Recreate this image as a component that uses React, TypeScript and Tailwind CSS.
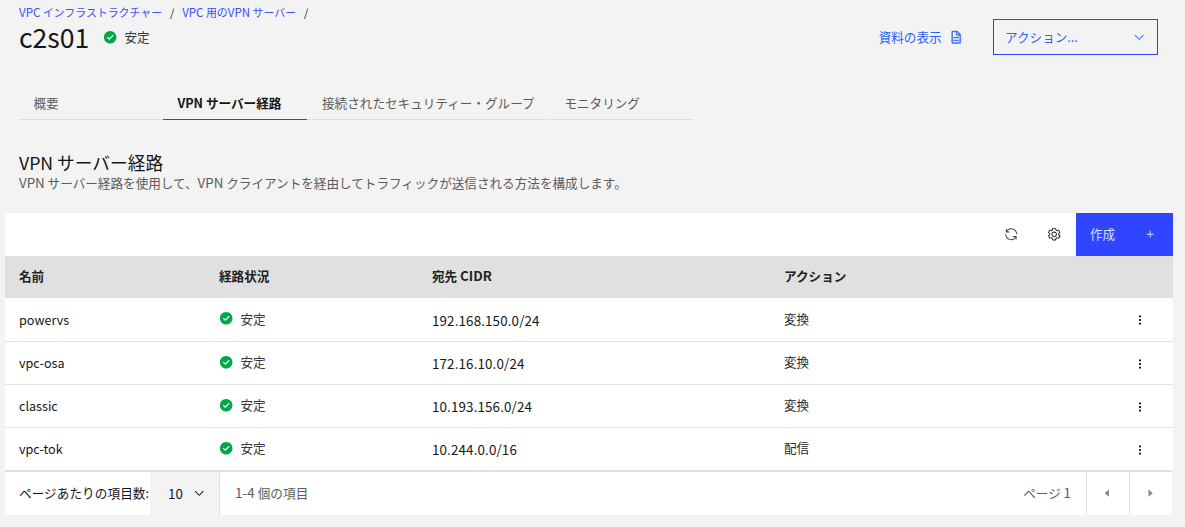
import type { ReactNode } from 'react';

const routes = [
  { name: 'powervs', status: '安定', cidr: '192.168.150.0/24', action: '変換' },
  { name: 'vpc-osa', status: '安定', cidr: '172.16.10.0/24', action: '変換' },
  { name: 'classic', status: '安定', cidr: '10.193.156.0/24', action: '変換' },
  { name: 'vpc-tok', status: '安定', cidr: '10.244.0.0/16', action: '配信' },
];

function Icon({ d, size = 16, box = 16, className = '' }: { d: string; size?: number; box?: number; className?: string }) {
  return (
    <svg width={size} height={size} viewBox={`0 0 ${box} ${box}`} fill="currentColor" className={`shrink-0 ${className}`}>
      <path fillRule="evenodd" d={d} />
    </svg>
  );
}

const CHEVRON = 'M8 11L3 6 3.7 5.3 8 9.6 12.3 5.3 13 6z';
const CHECK =
  'M8,1C4.1,1,1,4.1,1,8c0,3.9,3.1,7,7,7s7-3.1,7-7C15,4.1,11.9,1,8,1z M7,11L4.3,8.3l0.9-0.8L7,9.3l4-3.9l0.9,0.8L7,11z';
const DOCUMENT =
  'M25.7,9.3l-7-7C18.5,2.1,18.3,2,18,2H8C6.9,2,6,2.9,6,4v24c0,1.1,0.9,2,2,2h16c1.1,0,2-0.9,2-2V10C26,9.7,25.9,9.5,25.7,9.3z M18,4.4l5.6,5.6H18V4.4z M24,28H8V4h8v6c0,1.1,0.9,2,2,2h6V28z M10 22h12v2H10z M10 16h12v2H10z';
const RENEW =
  'M12 10H6.78A11 11 0 0127 16h2A13 13 0 006 7.68V4H4v8h8zM20 22h5.22A11 11 0 015 16H3a13 13 0 0023 8.32V28h2V20H20z';
const SETTINGS =
  'M13.5,8.4c0-0.1,0-0.3,0-0.4c0-0.1,0-0.3,0-0.4l1-0.8c0.4-0.3,0.4-0.9,0.2-1.3l-1.2-2C13.3,3.2,13,3,12.6,3c-0.1,0-0.2,0-0.3,0.1l-1.2,0.4c-0.2-0.1-0.4-0.3-0.7-0.4l-0.3-1.3C10.1,1.3,9.7,1,9.2,1H6.8c-0.5,0-0.9,0.3-1,0.8L5.6,3.1C5.3,3.2,5.1,3.3,4.9,3.4L3.7,3C3.6,3,3.5,3,3.4,3C3,3,2.7,3.2,2.5,3.5l-1.2,2C1.1,5.9,1.2,6.4,1.6,6.8l0.9,0.9c0,0.1,0,0.3,0,0.4c0,0.1,0,0.3,0,0.4L1.6,9.2c-0.4,0.3-0.5,0.9-0.2,1.3l1.2,2C2.7,12.8,3,13,3.4,13c0.1,0,0.2,0,0.3-0.1l1.2-0.4c0.2,0.1,0.4,0.3,0.7,0.4l0.3,1.3c0.1,0.5,0.5,0.8,1,0.8h2.4c0.5,0,0.9-0.3,1-0.8l0.3-1.3c0.2-0.1,0.4-0.2,0.7-0.4l1.2,0.4c0.1,0,0.2,0.1,0.3,0.1c0.4,0,0.7-0.2,0.9-0.5l1.1-2c0.2-0.4,0.2-0.9-0.2-1.3L13.5,8.4z M12.6,12l-1.7-0.6c-0.4,0.3-0.9,0.6-1.4,0.8L9.2,14H6.8l-0.4-1.8c-0.5-0.2-0.9-0.5-1.4-0.8L3.4,12l-1.2-2l1.4-1.2c-0.1-0.5-0.1-1.1,0-1.6L2.2,6l1.2-2l1.7,0.6C5.5,4.2,6,4,6.5,3.8L6.8,2h2.4l0.4,1.8c0.5,0.2,0.9,0.5,1.4,0.8L12.6,4l1.2,2l-1.4,1.2c0.1,0.5,0.1,1.1,0,1.6l1.4,1.2L12.6,12z M8,11c-1.7,0-3-1.3-3-3s1.3-3,3-3s3,1.3,3,3C11,9.7,9.7,11,8,11z M8,6C6.9,6,6,6.9,6,8s0.9,2,2,2s2-0.9,2-2S9.1,6,8,6z';

// latin runs are set a little larger than the kana around them
function L({ children }: { children: ReactNode }) {
  return <span className="text-[1.06em]">{children}</span>;
}

function Status({ label }: { label: string }) {
  return (
    <span className="flex items-center">
      <Icon d={CHECK} size={14.4} className="text-[#00a84b]" />
      <span className="ml-[7px] text-[#3a3a3a]">{label}</span>
    </span>
  );
}

export default function App() {
  return (
    <div className="h-[527px] w-[1185px] overflow-hidden bg-[#f3f3f3] font-['Noto_Sans_CJK_JP',sans-serif] text-[12.6px] leading-[18px] whitespace-nowrap text-[#161616]">
      {/* Page header */}
      <header className="flex h-[90px] justify-between pr-[27px] pl-[19px]">
        <div>
          <nav className="flex h-[24px] items-center text-[10.92px] leading-[14px] text-[#3d4ef5]">
            <a><L>VPC</L> インフラストラクチャー</a>
            <span className="w-[20px] text-center text-[#161616]">/</span>
            <a><L>VPC</L> 用の<L>VPN</L> サーバー</a>
            <span className="w-[20px] text-center text-[#161616]">/</span>
          </nav>
          <div className="flex h-[26px] items-center">
            <h1 className="w-[84px] text-[26.6px] leading-[26px]">c2s01</h1>
            <Status label="安定" />
          </div>
        </div>
        <div className="flex pt-[19px] text-[#2c62f6]">
          <a className="flex h-[36px] items-center">
            資料の表示
            <Icon d={DOCUMENT} box={32} size={14.4} className="ml-[7px] stroke-current stroke-[0.8]" />
          </a>
          <button className="ml-[30px] flex h-[36px] w-[165px] items-center justify-between border border-[#2f44f0] pr-[11px] pl-[11px]">
            アクション...
            <Icon d={CHEVRON} size={14.4} />
          </button>
        </div>
      </header>

      {/* Tabs */}
      <div className="ml-[19px] flex h-[30px] text-[#5c5c5c]">
        <div className="w-[144px] border-b border-[#dedede] pt-[4px] pl-[14.4px]">概要</div>
        <div className="w-[144px] border-b border-[#2c42e8] pt-[4px] pl-[14.4px] font-bold text-[#161616]">VPN サーバー経路</div>
        <div className="mr-px w-[242px] border-b border-[#dedede] pt-[4px] pl-[15px]">接続されたセキュリティー・グループ</div>
        <div className="w-[143px] border-b border-[#dedede] pt-[4px] pl-[14.4px]">モニタリング</div>
      </div>

      <div className="h-[93px] pt-[32px] pl-[19px]">
        <h2 className="h-[22px] text-[17.7px] leading-[21px]">VPN サーバー経路</h2>
        <p className="text-[#5c5c5c]"><L>VPN</L> サーバー経路を使用して、<L>VPN</L> クライアントを経由してトラフィックが送信される方法を構成します。</p>
      </div>

      {/* Routes table */}
      <div className="ml-[5px] w-[1168px]">
        <div className="flex h-[43px] items-center justify-end bg-white">
          <Icon d={RENEW} box={32} size={14.4} className="mr-[28px] text-[#3a3a3a]" />
          <Icon d={SETTINGS} size={14.4} className="mr-[15px] text-[#161616]" />
          <button className="flex h-[43px] w-[97px] items-center justify-between bg-[#3045ff] pr-[16px] pl-[14px] text-[#d3e2ff]">
            <span className="pb-[2px]">作成</span>
            <Icon d="M17 15V8h-2v7H8v2h7v7h2v-7h7v-2z" box={32} size={14.4} />
          </button>
        </div>

        <table className="w-full table-fixed border-collapse text-left">
          <colgroup>
            <col className="w-[214px]" />
            <col className="w-[213px]" />
            <col className="w-[352px]" />
            <col />
            <col className="w-[48px]" />
          </colgroup>
          <thead>
            <tr className="h-[42px] bg-[#e0e0e0] text-[#222]">
              <th className="pb-[2px] pl-[14px]">名前</th>
              <th className="pb-[2px]">経路状況</th>
              <th className="pb-[2px]">宛先 <L>CIDR</L></th>
              <th className="pb-[2px]">アクション</th>
              <th></th>
            </tr>
          </thead>
          <tbody>
            {routes.map((route) => (
              <tr key={route.name} className="h-[43px] bg-white shadow-[inset_0_-1px_0_#e0e0e0] first:h-[44px]">
                <td className="pb-px pl-[14px]">{route.name}</td>
                <td className="pb-[3px]"><Status label={route.status} /></td>
                <td className="pt-px tracking-[0.15px]"><L>{route.cidr}</L></td>
                <td className="pb-[3px] text-[#2a2a2a]">{route.action}</td>
                <td>
                  <svg width="4" height="10" viewBox="0 0 4 10" fill="#161616" className="ml-[13px]">
                    <rect x="1" y="0.5" width="2" height="1.8" />
                    <rect x="1" y="4.1" width="2" height="1.8" />
                    <rect x="1" y="7.7" width="2" height="1.8" />
                  </svg>
                </td>
              </tr>
            ))}
          </tbody>
        </table>

        {/* Pagination */}
        <div className="flex h-[44px] w-[1167px] items-stretch border-t border-[#e0e0e0] bg-white leading-[41px] text-[#5c5c5c]">
          <span className="w-[145px] pl-[14px] tracking-[0.08px] text-[#161616]">ページあたりの項目数:</span>
          <div className="flex w-[70px] items-center justify-between border-r border-[#e0e0e0] bg-[#f3f3f3] pr-[13px] pl-[18px] text-[#161616]">
            <L>10</L>
            <Icon d={CHEVRON} size={14.4} />
          </div>
          <span className="flex-1 pl-[15px] tracking-[0.1px]"><L>1-4</L> 個の項目</span>
          <span className="pr-[15px]">ページ <L>1</L></span>
          <button className="flex w-[43px] items-center justify-center border-l border-[#e0e0e0] pr-px text-[#8d8d8d]">
            <Icon d="M20 24L10 16 20 8z" box={32} size={14.4} />
          </button>
          <button className="flex w-[43px] items-center justify-center border-l border-[#e0e0e0] pr-px text-[#8d8d8d]">
            <Icon d="M12 8L22 16 12 24z" box={32} size={14.4} />
          </button>
        </div>
      </div>
    </div>
  );
}
